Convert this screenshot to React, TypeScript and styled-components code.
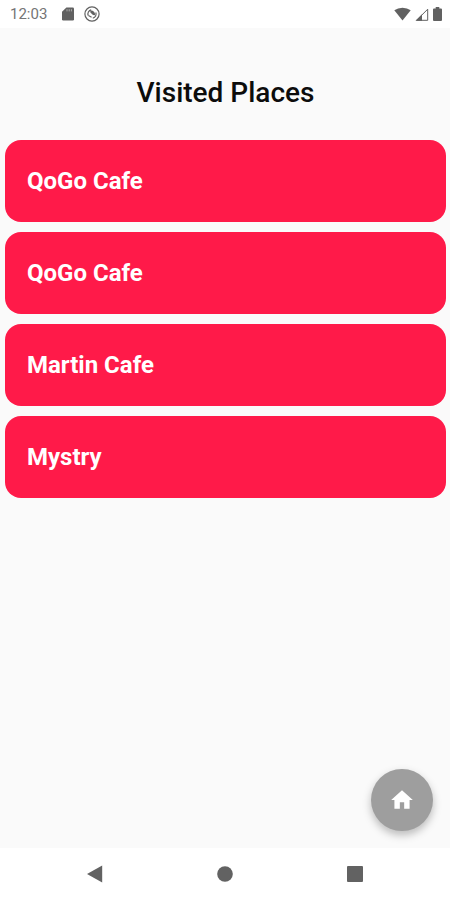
import React from "react";
import styled, { createGlobalStyle } from "styled-components";

const GlobalStyle = createGlobalStyle`
  *, *::before, *::after { box-sizing: border-box; }
  body {
    margin: 0;
    background: #fafafa;
    font-family: Roboto, "Liberation Sans", sans-serif;
  }
`;

const Screen = styled.div`
  min-height: 100vh;
  display: flex;
  flex-direction: column;
`;

const StatusBar = styled.header`
  display: flex;
  align-items: center;
  justify-content: space-between;
  height: 28px;
  padding: 0 8px 0 10px;
  background: #fff;
  color: #616161;
`;

const StatusGroup = styled.div<{ $gap: number }>`
  display: flex;
  align-items: center;
  gap: ${({ $gap }) => $gap}px;

  svg { display: block; }
`;

const Clock = styled.time`
  margin-right: 5px;
  font-size: 15px;
  line-height: 28px;
  color: #757575;
`;

const Content = styled.main`
  flex: 1;
  display: flex;
  flex-direction: column;
  padding: 49px 4px 17px 5px;
`;

const Title = styled.h1`
  margin: 0 0 31px;
  font-size: 28px;
  font-weight: 500;
  line-height: 32px;
  text-align: center;
  color: #0c0c0c;
`;

const PlaceList = styled.ul`
  display: flex;
  flex-direction: column;
  gap: 10px;
  margin: 0;
  padding: 0;
  list-style: none;
`;

const PlaceCard = styled.li`
  padding: 25px 22px;
  border-radius: 16px;
  background: #ff1a49;
  color: #fff;
  font-size: 24px;
  font-weight: 700;
  line-height: 32px;
`;

const HomeButton = styled.button`
  display: flex;
  align-items: center;
  justify-content: center;
  width: 62px;
  height: 62px;
  margin: auto 13px 0 auto;
  padding: 0;
  border: 0;
  border-radius: 50%;
  background: #9e9e9e;
  color: #fff;
  box-shadow: 0 4px 8px rgba(0, 0, 0, 0.26);
  cursor: pointer;
`;

const NavBar = styled.nav`
  display: flex;
  justify-content: center;
  height: 52px;
  background: #fff;
`;

const NavButton = styled.button`
  display: flex;
  align-items: center;
  justify-content: center;
  width: 130px;
  padding: 0;
  border: 0;
  background: none;
  color: #626262;
  cursor: pointer;
`;

const MemoryCardIcon = () => (
  <svg width="12" height="14" viewBox="0 0 12 14" aria-hidden="true">
    <path
      fill="currentColor"
      d="M4.4 .5H10.8Q12 .5 12 1.7V12.3Q12 13.5 10.8 13.5H1.2Q0 13.5 0 12.3V4.8Z"
    />
    <path stroke="#fff" strokeOpacity=".55" strokeWidth=".9" d="M5 2.2V4.4M7.2 2.2V4.4M9.4 2.2V4.4" />
  </svg>
);

const SyncBadgeIcon = () => (
  <svg width="16" height="16" viewBox="0 0 16 16" fill="none" stroke="currentColor" aria-hidden="true">
    <circle cx="8" cy="8" r="7.1" strokeWidth="1.2" />
    <path d="M4.2 9.6A4.2 4.2 0 0 1 7.2 3.9M11.8 6.4A4.2 4.2 0 0 1 8.8 12.1" strokeWidth="1.2" />
    <path d="M6.2 4.6Q10.8 4.2 11.2 9.2L9 8.9L6.4 6.6Z" fill="currentColor" stroke="none" />
    <path d="M4.4 9.4L7.6 11.2" strokeWidth="1.2" />
  </svg>
);

const WifiIcon = () => (
  <svg width="17" height="14" viewBox="0 0 17 14" aria-hidden="true">
    <path fill="currentColor" d="M8.5 13.5L0.3 3.3Q3.8 .7 8.5 .7T16.7 3.3Z" />
  </svg>
);

const SignalIcon = () => (
  <svg width="14" height="13" viewBox="0 0 14 13" aria-hidden="true">
    <path d="M1.6 12.3H12.7V1.2Z" fill="none" stroke="currentColor" strokeWidth="1" />
    <path d="M.5 12.8L7 6.3V12.8Z" fill="currentColor" />
  </svg>
);

const BatteryIcon = () => (
  <svg width="9" height="14" viewBox="0 0 9 14" aria-hidden="true">
    <path
      fill="currentColor"
      d="M2.7 0H6.3V1.5H8Q9 1.5 9 2.5V13Q9 14 8 14H1Q0 14 0 13V2.5Q0 1.5 1 1.5H2.7Z"
    />
  </svg>
);

const HomeIcon = () => (
  <svg width="26" height="26" viewBox="0 0 24 24" aria-hidden="true">
    <path fill="currentColor" d="M10 20v-6h4v6h5v-8h3L12 3 2 12h3v8z" />
  </svg>
);

const BackIcon = () => (
  <svg width="16" height="18" viewBox="0 0 16 18" aria-hidden="true">
    <path fill="currentColor" d="M15.2 .5V17.5L0 9Z" />
  </svg>
);

const CircleIcon = () => (
  <svg width="16" height="16" viewBox="0 0 16 16" aria-hidden="true">
    <circle cx="8" cy="8" r="7.8" fill="currentColor" />
  </svg>
);

const SquareIcon = () => (
  <svg width="16" height="16" viewBox="0 0 16 16" aria-hidden="true">
    <rect width="16" height="16" rx="1" fill="currentColor" />
  </svg>
);

const places = [
  { id: 1, name: "QoGo Cafe" },
  { id: 2, name: "QoGo Cafe" },
  { id: 3, name: "Martin Cafe" },
  { id: 4, name: "Mystry" },
];

export default function App() {
  return (
    <Screen>
      <GlobalStyle />
      <StatusBar>
        <StatusGroup $gap={10}>
          <Clock>12:03</Clock>
          <MemoryCardIcon />
          <SyncBadgeIcon />
        </StatusGroup>
        <StatusGroup $gap={4}>
          <WifiIcon />
          <SignalIcon />
          <BatteryIcon />
        </StatusGroup>
      </StatusBar>
      <Content>
        <Title>Visited Places</Title>
        <PlaceList>
          {places.map((place) => (
            <PlaceCard key={place.id}>{place.name}</PlaceCard>
          ))}
        </PlaceList>
        <HomeButton type="button" aria-label="Home">
          <HomeIcon />
        </HomeButton>
      </Content>
      <NavBar aria-label="System navigation">
        <NavButton type="button" aria-label="Back"><BackIcon /></NavButton>
        <NavButton type="button" aria-label="Home screen"><CircleIcon /></NavButton>
        <NavButton type="button" aria-label="Recent apps"><SquareIcon /></NavButton>
      </NavBar>
    </Screen>
  );
}
